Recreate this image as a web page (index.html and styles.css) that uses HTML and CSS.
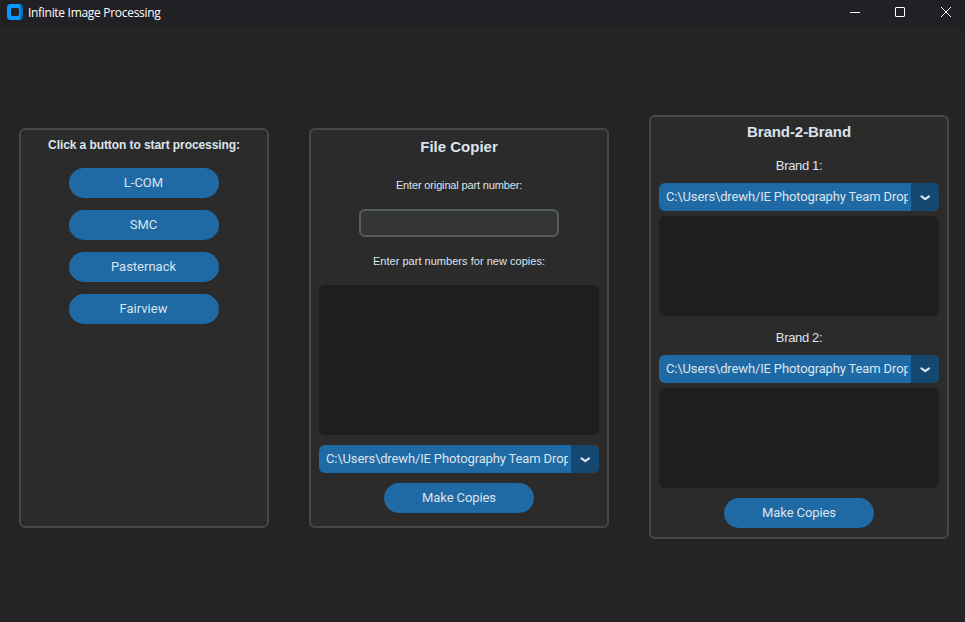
FILE: index.html
```html
<!DOCTYPE html>
<html lang="en">
<head>
<meta charset="utf-8">
<title>Infinite Image Processing</title>
<link rel="stylesheet" href="styles.css">
</head>
<body>
<header class="titlebar">
  <svg class="logo" width="16" height="16" viewBox="0 0 16 16"><rect width="16" height="16" rx="4" fill="#0868b8"/><path d="M4 0h7.500a2 2 0 0 1 2 2v12a2 2 0 0 1-2 2H4a4 4 0 0 1-4-4V4a4 4 0 0 1 4-4z" fill="#0a98ff"/><rect x="4" y="4" width="8" height="8" rx="1.500" fill="#212025"/></svg>
  <h1 class="caption">Infinite Image Processing</h1>
  <svg class="controls" width="101" height="12" viewBox="0 0 101 12" fill="none" stroke="#fff"><path d="M0 6.500h10"/><rect x="45.500" y="1.500" width="9" height="9" rx=".5"/><path d="M91 1l10 10M101 1L91 11"/></svg>
</header>
<main class="workspace">
  <section class="panel launcher">
    <h2 class="prompt">Click a button to start processing:</h2>
    <button class="btn">L-COM</button>
    <button class="btn">SMC</button>
    <button class="btn">Pasternack</button>
    <button class="btn">Fairview</button>
  </section>
  <section class="panel copier">
    <h2 class="heading">File Copier</h2>
    <label class="hint hint-original" for="original">Enter original part number:</label>
    <input class="entry" id="original">
    <label class="hint hint-copies" for="copies">Enter part numbers for new copies:</label>
    <textarea class="textbox textbox-tall" id="copies"></textarea>
    <div class="option"><span class="value">C:\Users\drewh/IE Photography Team Drop</span><span class="arrow"><svg width="10" height="6" viewBox="0 0 10 6"><path d="M1.500 1.300L5.300 4.200L9 1.300"/></svg></span></div>
    <button class="btn">Make Copies</button>
  </section>
  <section class="panel brands">
    <h2 class="heading">Brand-2-Brand</h2>
    <label class="brand" for="brand1">Brand 1:</label>
    <div class="option"><span class="value">C:\Users\drewh/IE Photography Team Drop</span><span class="arrow"><svg width="10" height="6" viewBox="0 0 10 6"><path d="M1.500 1.300L5.300 4.200L9 1.300"/></svg></span></div>
    <textarea class="textbox" id="brand1"></textarea>
    <label class="brand brand-second" for="brand2">Brand 2:</label>
    <div class="option"><span class="value">C:\Users\drewh/IE Photography Team Drop</span><span class="arrow"><svg width="10" height="6" viewBox="0 0 10 6"><path d="M1.500 1.300L5.300 4.200L9 1.300"/></svg></span></div>
    <textarea class="textbox" id="brand2"></textarea>
    <button class="btn">Make Copies</button>
  </section>
</main>
</body>
</html>
```
FILE: styles.css
```css
* { box-sizing: border-box; }
body { margin: 0; height: 622px; overflow: hidden; background: #242424; color: #dce4ee; font-family: "Liberation Sans", sans-serif; }
h1, h2 { margin: 0; }
.titlebar { display: flex; height: 28px; padding: 4px 14px 0 7px; background: #212025; }
.caption { margin: 0 auto 0 5px; color: #fff; font: 400 12px/18px "Open Sans", sans-serif; letter-spacing: -.3px; white-space: nowrap; }
.controls { margin-top: 2px; }
.workspace { display: flex; align-items: flex-start; gap: 40px; padding: 87px 16px 0 19px; }
.panel { display: flex; flex-direction: column; align-items: center; flex: none; width: 300px; border: 2px solid #474747; border-radius: 6px; background: #2b2b2b; }
.launcher { width: 250px; height: 400px; margin-top: 13px; gap: 12px; }
.copier { height: 400px; margin-top: 13px; }
.brands { height: 424px; }
.prompt { height: 26px; padding-top: 5px; font-size: 12px; line-height: 20px; letter-spacing: -.08px; white-space: nowrap; }
.heading { height: 20px; margin-top: 7px; font-size: 15px; line-height: 20px; }
.brands .heading { margin-top: 5px; letter-spacing: -.08px; }
.btn { flex: none; width: 150px; height: 30px; padding: 0; border: 0; border-radius: 15px; background: #1f6aa5; color: #dce4ee; font: 13px/30px Roboto, sans-serif; letter-spacing: -.1px; }
.launcher .btn { padding-right: 1px; letter-spacing: 0; }
.hint { height: 16px; font-size: 11px; line-height: 16px; white-space: nowrap; }
.hint-original { margin-top: 20px; letter-spacing: -.15px; }
.hint-copies { margin-top: 16px; letter-spacing: .03px; }
.entry { width: 200px; height: 28px; margin-top: 16px; border: 2px solid #565b5e; border-radius: 6px; background: #343638; color: #dce4ee; }
.textbox { flex: none; width: 280px; height: 100px; margin: 5px 0 10px; border: 0; border-radius: 6px; background: #1d1e1e; color: #dce4ee; resize: none; }
.textbox-tall { height: 150px; margin-top: 16px; }
.option { display: flex; flex: none; width: 280px; height: 28px; overflow: hidden; border-radius: 6px; background: #1f6aa5; font: 13px/28px Roboto, sans-serif; letter-spacing: -.14px; }
.value { width: 242px; margin: 0 3px 0 7px; overflow: hidden; white-space: nowrap; }
.arrow { display: flex; align-items: center; justify-content: center; width: 28px; padding-top: 1px; background: #144870; }
.arrow path { fill: none; stroke: #dce4ee; stroke-width: 2.1; stroke-linecap: round; stroke-linejoin: round; }
.copier .btn { margin-top: 10px; }
.brand { height: 20px; margin: 14px 0 7px; font-size: 13px; line-height: 20px; letter-spacing: -.35px; }
.brand-second { margin-top: 2px; }
```
